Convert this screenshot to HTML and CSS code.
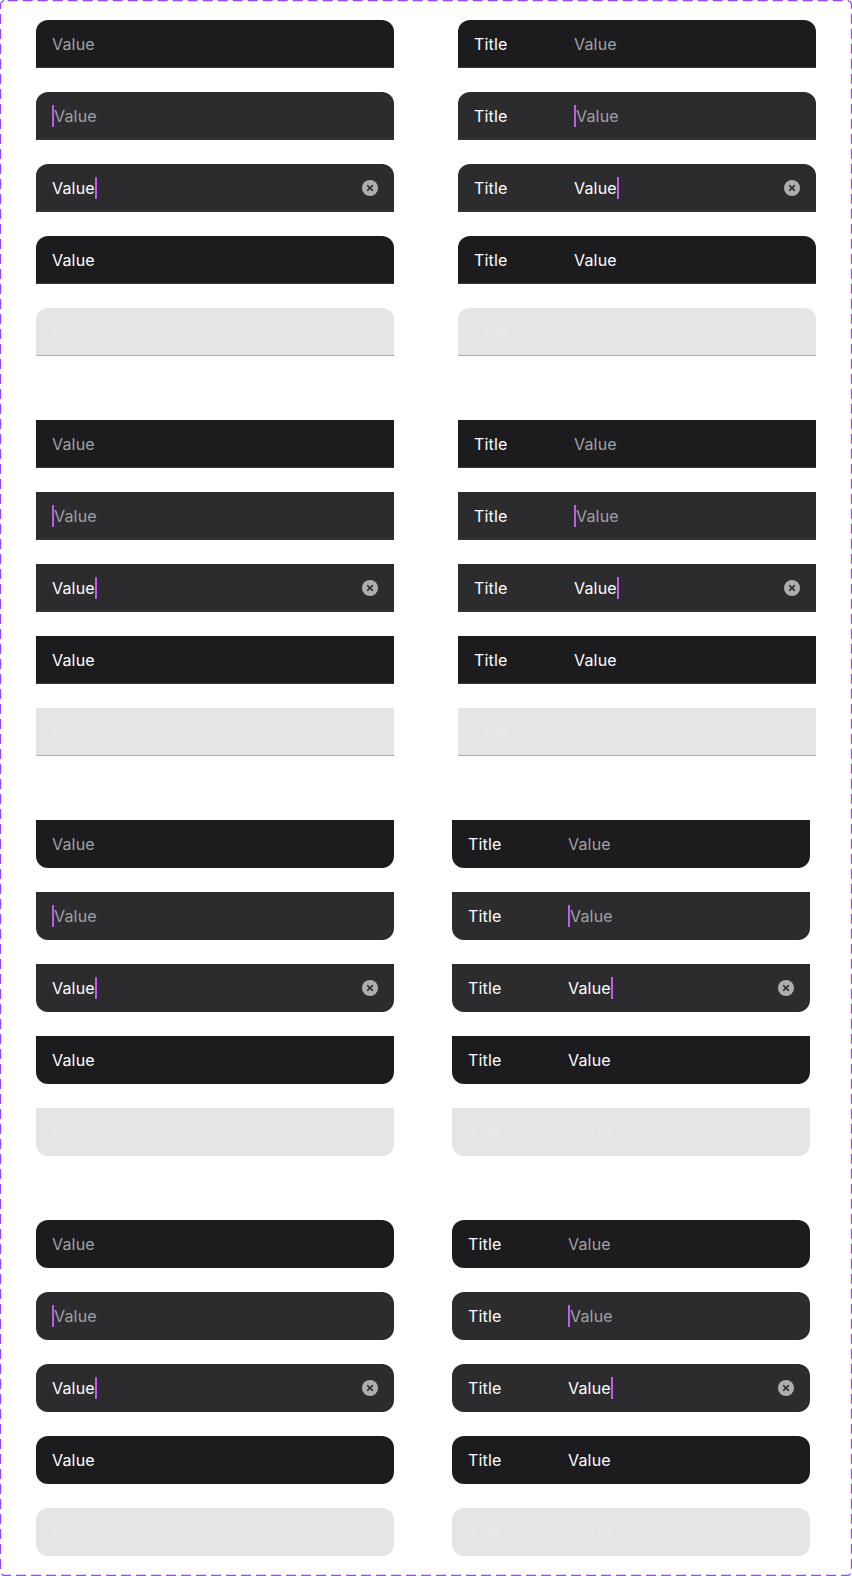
FILE: index.html
```html
<!DOCTYPE html>
<html lang="en">
<head>
  <title>Text Fields</title>
  <meta charset="UTF-8">
  <link rel="stylesheet" href="styles.css">
</head>
<body>
  <div class="frame">
    <svg class="frame-dash" width="852" height="1576"><rect x="0.5" y="0.5" width="851" height="1575" rx="4.5"/></svg>

    <!-- top corners rounded, underline -->
    <div class="group top">
      <div class="column">
        <div class="field"><span class="value hint">Value</span></div>
        <div class="field focus"><i class="caret"></i><span class="value hint">Value</span></div>
        <div class="field focus"><span class="value">Value</span><i class="caret"></i><svg class="clear" width="16" height="16" viewBox="0 0 16 16"><circle cx="8" cy="8" r="8"/><path d="M5.6 5.6l4.8 4.8M10.4 5.6l-4.8 4.8"/></svg></div>
        <div class="field"><span class="value">Value</span></div>
        <div class="field off"><span class="value">Value</span></div>
      </div>
      <div class="column">
        <div class="field"><span class="title">Title</span><span class="value hint">Value</span></div>
        <div class="field focus"><span class="title">Title</span><i class="caret"></i><span class="value hint">Value</span></div>
        <div class="field focus"><span class="title">Title</span><span class="value">Value</span><i class="caret"></i><svg class="clear" width="16" height="16" viewBox="0 0 16 16"><circle cx="8" cy="8" r="8"/><path d="M5.6 5.6l4.8 4.8M10.4 5.6l-4.8 4.8"/></svg></div>
        <div class="field"><span class="title">Title</span><span class="value">Value</span></div>
        <div class="field off"><span class="title">Title</span><span class="value">Value</span></div>
      </div>
    </div>

    <!-- square, underline -->
    <div class="group square">
      <div class="column">
        <div class="field"><span class="value hint">Value</span></div>
        <div class="field focus"><i class="caret"></i><span class="value hint">Value</span></div>
        <div class="field focus"><span class="value">Value</span><i class="caret"></i><svg class="clear" width="16" height="16" viewBox="0 0 16 16"><circle cx="8" cy="8" r="8"/><path d="M5.6 5.6l4.8 4.8M10.4 5.6l-4.8 4.8"/></svg></div>
        <div class="field"><span class="value">Value</span></div>
        <div class="field off"><span class="value">Value</span></div>
      </div>
      <div class="column">
        <div class="field"><span class="title">Title</span><span class="value hint">Value</span></div>
        <div class="field focus"><span class="title">Title</span><i class="caret"></i><span class="value hint">Value</span></div>
        <div class="field focus"><span class="title">Title</span><span class="value">Value</span><i class="caret"></i><svg class="clear" width="16" height="16" viewBox="0 0 16 16"><circle cx="8" cy="8" r="8"/><path d="M5.6 5.6l4.8 4.8M10.4 5.6l-4.8 4.8"/></svg></div>
        <div class="field"><span class="title">Title</span><span class="value">Value</span></div>
        <div class="field off"><span class="title">Title</span><span class="value">Value</span></div>
      </div>
    </div>

    <!-- bottom corners rounded -->
    <div class="group bottom narrow">
      <div class="column">
        <div class="field"><span class="value hint">Value</span></div>
        <div class="field focus"><i class="caret"></i><span class="value hint">Value</span></div>
        <div class="field focus"><span class="value">Value</span><i class="caret"></i><svg class="clear" width="16" height="16" viewBox="0 0 16 16"><circle cx="8" cy="8" r="8"/><path d="M5.6 5.6l4.8 4.8M10.4 5.6l-4.8 4.8"/></svg></div>
        <div class="field"><span class="value">Value</span></div>
        <div class="field off"><span class="value">Value</span></div>
      </div>
      <div class="column">
        <div class="field"><span class="title">Title</span><span class="value hint">Value</span></div>
        <div class="field focus"><span class="title">Title</span><i class="caret"></i><span class="value hint">Value</span></div>
        <div class="field focus"><span class="title">Title</span><span class="value">Value</span><i class="caret"></i><svg class="clear" width="16" height="16" viewBox="0 0 16 16"><circle cx="8" cy="8" r="8"/><path d="M5.6 5.6l4.8 4.8M10.4 5.6l-4.8 4.8"/></svg></div>
        <div class="field"><span class="title">Title</span><span class="value">Value</span></div>
        <div class="field off"><span class="title">Title</span><span class="value">Value</span></div>
      </div>
    </div>

    <!-- all corners rounded -->
    <div class="group round narrow">
      <div class="column">
        <div class="field"><span class="value hint">Value</span></div>
        <div class="field focus"><i class="caret"></i><span class="value hint">Value</span></div>
        <div class="field focus"><span class="value">Value</span><i class="caret"></i><svg class="clear" width="16" height="16" viewBox="0 0 16 16"><circle cx="8" cy="8" r="8"/><path d="M5.6 5.6l4.8 4.8M10.4 5.6l-4.8 4.8"/></svg></div>
        <div class="field"><span class="value">Value</span></div>
        <div class="field off"><span class="value">Value</span></div>
      </div>
      <div class="column">
        <div class="field"><span class="title">Title</span><span class="value hint">Value</span></div>
        <div class="field focus"><span class="title">Title</span><i class="caret"></i><span class="value hint">Value</span></div>
        <div class="field focus"><span class="title">Title</span><span class="value">Value</span><i class="caret"></i><svg class="clear" width="16" height="16" viewBox="0 0 16 16"><circle cx="8" cy="8" r="8"/><path d="M5.6 5.6l4.8 4.8M10.4 5.6l-4.8 4.8"/></svg></div>
        <div class="field"><span class="title">Title</span><span class="value">Value</span></div>
        <div class="field off"><span class="title">Title</span><span class="value">Value</span></div>
      </div>
    </div>
  </div>
</body>
</html>
```

FILE: styles.css
```css
body {
  margin: 0;
  background: #fff;
  font-family: Inter, 'Noto Sans', sans-serif;
}
.frame {
  position: relative;
  box-sizing: border-box;
  width: 852px;
  height: 1576px;
  padding: 20px 36px;
  display: flex;
  flex-direction: column;
  gap: 64px;
}
.frame-dash {
  position: absolute;
  top: 0;
  left: 0;
}
.frame-dash rect {
  fill: none;
  stroke: #9747ff;
  stroke-width: 1.3;
  stroke-dasharray: 10 5;
  stroke-dashoffset: -2.7;
}
.group {
  display: flex;
  gap: 64px;
}
.group.narrow {
  gap: 58px;
}
.column {
  width: 358px;
  display: flex;
  flex-direction: column;
  gap: 24px;
}
.field {
  box-sizing: border-box;
  height: 48px;
  padding: 0 16px;
  display: flex;
  align-items: center;
  background: #1c1c1e;
  font-size: 16px;
  font-weight: 375;
  line-height: 24px;
  letter-spacing: 0.2px;
  color: #fff;
}
.field.focus {
  background: #2c2c2e;
}
.field.off {
  background: #e5e5e8;
  color: #e9e9ec;
}
.top .field, .square .field {
  box-shadow: inset 0 -1px 0 #38383a;
}
.top .field.off, .square .field.off {
  box-shadow: inset 0 -1px 0 #aeaeb2;
}
.top .field {
  border-radius: 12px 12px 0 0;
}
.bottom .field {
  border-radius: 0 0 12px 12px;
}
.round .field {
  border-radius: 12px;
}
.title {
  width: 100px;
  flex: none;
}
.value.hint {
  color: #a1a1a6;
}
.caret {
  width: 2px;
  height: 22px;
  flex: none;
  background: #bf5af2;
}
.clear {
  margin-left: auto;
  flex: none;
}
.clear circle {
  fill: #aeaeb2;
}
.clear path {
  fill: none;
  stroke: #2c2c2e;
  stroke-width: 1.5;
  stroke-linecap: round;
}
```
